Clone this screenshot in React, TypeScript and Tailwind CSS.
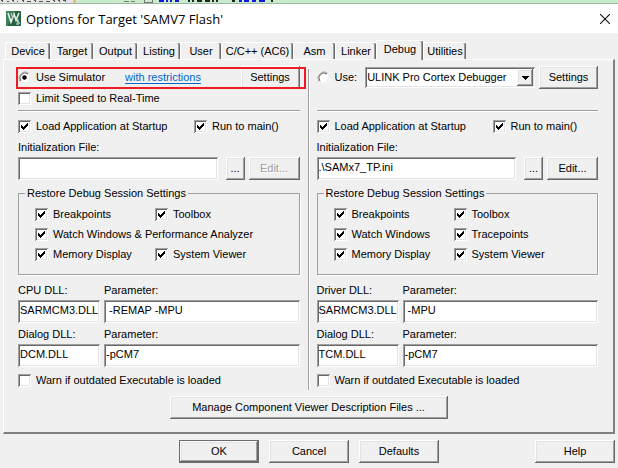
import { useId, type ReactNode } from "react";
import clsx from "clsx";

const RAISED =
  "bg-[#f0f0f0] shadow-[inset_-1px_-1px_#696969,inset_1px_1px_#ffffff,inset_-2px_-2px_#a0a0a0,inset_2px_2px_#e3e3e3]";
const SUNKEN =
  "bg-white shadow-[inset_1px_1px_#a0a0a0,inset_-1px_-1px_#ffffff,inset_2px_2px_#696969,inset_-2px_-2px_#e3e3e3]";

const tabs = [
  { name: "Device", width: "w-[45px]" },
  { name: "Target", width: "w-[43px]" },
  { name: "Output", width: "w-[44px]" },
  { name: "Listing", width: "w-[43px]" },
  { name: "User", width: "w-[41px]" },
  { name: "C/C++ (AC6)", width: "w-[72px]" },
  { name: "Asm", width: "w-[42px]" },
  { name: "Linker", width: "w-[41px]" },
  { name: "Debug", width: "w-[47px]" },
  { name: "Utilities", width: "w-[43px]" },
];

type ButtonProps = {
  children: ReactNode;
  className?: string;
  disabled?: boolean;
};

const Button = ({ children, className, disabled }: ButtonProps) => (
  <button
    type="button"
    disabled={disabled}
    className={clsx(
      "h-[23px] shrink-0 text-center disabled:text-[#a0a0a0] disabled:[text-shadow:1px_1px_#fff]",
      RAISED,
      className
    )}
  >
    {children}
  </button>
);

const Check = ({
  label,
  checked = false,
  className,
}: {
  label: string;
  checked?: boolean;
  className?: string;
}) => (
  <label className={clsx("flex h-5 items-center gap-[5px] whitespace-nowrap", className)}>
    <span className="relative size-[13px] shrink-0">
      <input
        type="checkbox"
        defaultChecked={checked}
        className={clsx("peer block size-[13px] appearance-none", SUNKEN)}
      />
      <svg
        viewBox="0 0 13 13"
        shapeRendering="crispEdges"
        className="pointer-events-none absolute inset-0 hidden size-[13px] peer-checked:block"
      >
        <path
          d="M3 5h1v1h1v1h1v-1h1v-1h1v-1h1v-1h1v3h-1v1h-1v1h-1v1h-1v1h-1v-1h-1v-1h-1z"
          fill="#000"
        />
      </svg>
    </span>
    {label}
  </label>
);

const Radio = ({ label, checked = false }: { label: string; checked?: boolean }) => (
  <label className="flex items-center gap-[5px] whitespace-nowrap">
    <span className="relative size-[13px] shrink-0">
      <input
        type="radio"
        name="driver"
        defaultChecked={checked}
        className="peer block size-[13px] appearance-none rounded-full bg-white"
      />
      <svg viewBox="0 0 13 13" className="pointer-events-none absolute inset-0 size-[13px]">
        <path d="M2.3 10.7A6 6 0 0 1 10.7 2.3" fill="none" stroke="#a0a0a0" />
        <path d="M3 10A5 5 0 0 1 10 3" fill="none" stroke="#696969" />
        <path d="M10.7 2.3A6 6 0 0 1 2.3 10.7" fill="none" stroke="#e3e3e3" />
      </svg>
      <svg
        viewBox="0 0 13 13"
        className="pointer-events-none absolute inset-0 hidden size-[13px] peer-checked:block"
      >
        <circle cx="6.5" cy="6.5" r="2.2" fill="#000" />
      </svg>
    </span>
    {label}
  </label>
);

const Field = ({
  label,
  value,
  className,
}: {
  label: string;
  value: string;
  className?: string;
}) => {
  const id = useId();
  return (
    <div className={className}>
      <label htmlFor={id} className="flex h-5 items-center">
        {label}
      </label>
      <input
        id={id}
        type="text"
        defaultValue={value}
        className={clsx("block h-[23px] w-full px-[2px] pb-[3px]", SUNKEN)}
      />
    </div>
  );
};

type PaneProps = {
  header: ReactNode;
  limit?: boolean;
  initFile: string;
  session: string[];
  dllLabel: string;
  dll: string;
  parameter: string;
  dialogDll: string;
  className?: string;
};

const Pane = (props: PaneProps) => (
  <div className={clsx("min-w-0 flex-1 pt-[5px]", props.className)}>
    {props.header}
    <div className="flex h-[18px] items-center">
      {props.limit && <Check label="Limit Speed to Real-Time" />}
    </div>
    <div className="mt-[3px] h-[2px] border-t border-b border-t-[#a0a0a0] border-b-white" />
    <div className="mt-1 grid grid-cols-[176px_1fr]">
      <Check label="Load Application at Startup" checked />
      <Check label="Run to main()" checked />
    </div>
    <div className="mt-px flex items-end">
      <Field label="Initialization File:" value={props.initFile} className="mr-2 flex-1" />
      <Button className="mr-1 w-[19px]">...</Button>
      <Button className="w-[51px]" disabled={!props.initFile}>
        Edit...
      </Button>
    </div>
    <fieldset className="mt-[5px] h-[90px] border border-[#a0a0a0] pl-4 shadow-[1px_1px_#fff]">
      <legend className="-ml-[10px] h-4 px-[2px] leading-4">Restore Debug Session Settings</legend>
      <div className="grid grid-cols-[120px_1fr] pt-[3px]">
        {props.session.map((item) => (
          <Check
            key={item}
            label={item}
            checked
            className={item.includes("&") ? "col-span-2" : undefined}
          />
        ))}
      </div>
    </fieldset>
    <div className="mt-[5px] grid grid-cols-[82px_1fr] gap-x-1 gap-y-px">
      <Field label={props.dllLabel} value={props.dll} />
      <Field label="Parameter:" value={props.parameter} />
      <Field label="Dialog DLL:" value={props.dialogDll} />
      <Field label="Parameter:" value="-pCM7" />
    </div>
    <Check label="Warn if outdated Executable is loaded" className="mt-[3px]" />
  </div>
);

const TitleBar = () => (
  <header className="flex h-[30px] items-center border-t border-[#9fb5a5] bg-white pr-[5px] pl-[6px]">
    <svg viewBox="0 0 15 15" className="size-[15px]">
      <rect width="15" height="15" rx="1" fill="#23613f" />
      <path d="M0 0h8L2 15H0z" fill="#3d8059" />
      <path d="M2 2l3 9 3-8 2 6 3-7" fill="none" stroke="#e8f1eb" strokeWidth="1.6" />
      <path d="M5 2l2 6M8 2l-1 3" fill="none" stroke="#b9d3c3" />
      <path d="M13 9h-2v2h2v2h-3" fill="none" stroke="#e8f1eb" />
    </svg>
    <h1 className="ml-[5px] flex-1 font-['Open_Sans',sans-serif] text-[13px] leading-5 text-black">
      Options for Target &apos;SAMV7 Flash&apos;
    </h1>
    <button type="button" aria-label="Close" className="flex size-4 items-center justify-center">
      <svg viewBox="0 0 10 10" className="size-[10px]">
        <path d="M0 0l10 10M10 0L0 10" stroke="#111" strokeWidth="1.1" />
      </svg>
    </button>
  </header>
);

const App = () => {
  return (
    <div className="min-h-screen bg-[#f0f0f0] font-['Liberation_Sans',sans-serif] text-[11px] text-black">
      {/* Sliver of the editor behind the dialog */}
      <div className="flex h-[3px] items-end overflow-hidden bg-[#c7edcc]">
        <svg viewBox="0 0 280 3" className="h-[3px] w-[280px]" shapeRendering="crispEdges">
          <path d="M0 0h77v3H0z" fill="#e4e6e4" />
          <path d="M73 0h3v3h-3z" fill="#d8c66a" />
          <path
            d="M1 0h1v2M7 1h2M12 0h1v2M17 1h1M22 0h1v2M27 1h4M34 0h1v2M39 1h4M46 1h4M53 0h1v2M58 0h1v2M63 0h2v2"
            stroke="#555"
            fill="none"
          />
          <path d="M124 1h5M131 1h4M144 0v2h8V0" stroke="#777" fill="none" />
          <path d="M159 1h5M167 0v2M171 0v2M175 1h4" stroke="#1616d8" strokeWidth="2" fill="none" />
          <path
            d="M189 0v2M193 0v2M197 1h5M205 1h5M213 0v2M217 0v2M232 1h3M271 1h2"
            stroke="#222"
            strokeWidth="2"
            fill="none"
          />
          <path d="M239 1h3M244 1h5M252 1h4M259 1h6" stroke="#1616d8" strokeWidth="2" fill="none" />
        </svg>
      </div>
      <TitleBar />

      <main className="px-[3px] pt-[7px]">
        <nav className="flex h-[19px] items-end pl-[2px]" role="tablist">
          {tabs.map(({ name, width }) => {
            const active = name === "Debug";
            return (
              <button
                key={name}
                type="button"
                role="tab"
                aria-selected={active}
                className={clsx(
                  "rounded-t-[2px] border-t border-l border-white text-center whitespace-nowrap",
                  "shadow-[inset_-1px_0_#696969,inset_-2px_0_#a0a0a0]",
                  width,
                  active ? "z-10 -mb-px h-5 bg-[#f0f0f0] pb-1" : "h-[17px]"
                )}
              >
                {name}
              </button>
            );
          })}
        </nav>

        <section className="border-t border-r-2 border-b-2 border-l border-t-white border-r-[#808080] border-b-[#808080] border-l-white px-px pt-px">
          <div className="flex">
            <Pane
              className="pr-2 pl-[13px]"
              header={
                <div className="relative flex h-[23px] items-center">
                  <Radio label="Use Simulator" checked />
                  <a
                    href="#restrictions"
                    className="ml-5 flex-1 text-[#0066cc] underline underline-offset-2"
                  >
                    with restrictions
                  </a>
                  <Button className="w-[59px]">Settings</Button>
                  {/* highlight */}
                  <div className="pointer-events-none absolute -right-[6px] -left-[2px] h-[22px] border-2 border-[#ed1c24]" />
                </div>
              }
              limit
              initFile=""
              session={[
                "Breakpoints",
                "Toolbox",
                "Watch Windows & Performance Analyzer",
                "Memory Display",
                "System Viewer",
              ]}
              dllLabel="CPU DLL:"
              dll="SARMCM3.DLL"
              parameter=" -REMAP -MPU"
              dialogDll="DCM.DLL"
            />
            <div className="mt-2 w-[2px] border-r border-l border-r-white border-l-[#a0a0a0]" />
            <Pane
              className="pr-[14px] pl-[7px]"
              header={
                <div className="flex h-[23px] items-center">
                  <Radio label="Use:" />
                  <div className="relative mx-1 ml-2 flex-1">
                    <select
                      aria-label="Debugger"
                      className={clsx(
                        "block h-[21px] w-full appearance-none pr-5 pl-[2px]",
                        SUNKEN
                      )}
                    >
                      <option>ULINK Pro Cortex Debugger</option>
                    </select>
                    <span
                      className={clsx(
                        "pointer-events-none absolute top-[2px] right-[2px] flex h-[17px] w-4 items-center justify-center",
                        RAISED
                      )}
                    >
                      <svg viewBox="0 0 7 4" className="h-1 w-[7px]" shapeRendering="crispEdges">
                        <path d="M0 0h7v1H6v1H5v1H4v1H3V3H2V2H1V1H0z" />
                      </svg>
                    </span>
                  </div>
                  <Button className="w-[59px]">Settings</Button>
                </div>
              }
              initFile=".\SAMx7_TP.ini"
              session={[
                "Breakpoints",
                "Toolbox",
                "Watch Windows",
                "Tracepoints",
                "Memory Display",
                "System Viewer",
              ]}
              dllLabel="Driver DLL:"
              dll="SARMCM3.DLL"
              parameter=" -MPU"
              dialogDll="TCM.DLL"
            />
          </div>
          <div className="flex justify-center pt-[6px] pb-[13px]">
            <Button className="w-[278px]">Manage Component Viewer Description Files ...</Button>
          </div>
        </section>

        <footer className="flex items-center justify-end gap-[10px] py-[6px]">
          <Button className="w-20 border border-[#696969]">OK</Button>
          <Button className="w-20">Cancel</Button>
          <Button className="mr-[86px] w-20">Defaults</Button>
          <Button className="w-20">Help</Button>
        </footer>
      </main>
    </div>
  );
};

export default App;
